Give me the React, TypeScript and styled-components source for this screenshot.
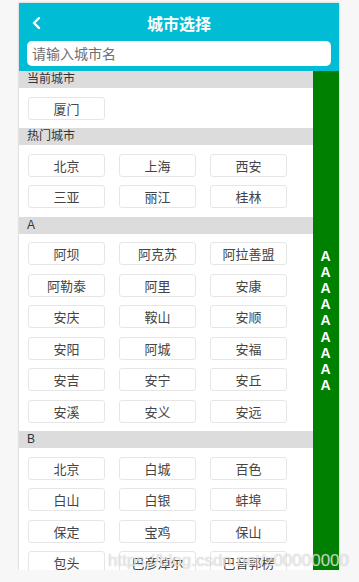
import styled, { createGlobalStyle } from 'styled-components';

const GlobalStyle = createGlobalStyle`
  html, body {
    margin: 0;
    padding: 0;
    background: #f7f7f7;
    font-family: "Liberation Sans", "Noto Sans CJK SC", sans-serif;
  }
`;

const Page = styled.div`
  position: relative;
  padding: 3px 0 0 19px;
  overflow: hidden;
`;

const Phone = styled.div`
  width: 320px;
  height: 567px;
  background: #fff;
  box-shadow: 0 0 2px rgba(0, 0, 0, 0.25);
  display: flex;
  flex-direction: column;
  overflow: hidden;
`;

const Header = styled.header`
  background-color: #00bcd4;
  padding: 0 8px 5px;
  flex-shrink: 0;

  .title-bar {
    height: 38px;
    display: flex;
    align-items: center;
    justify-content: center;
    position: relative;
  }

  .back {
    position: absolute;
    left: 5px;
    top: 14px;
  }

  .title {
    font-size: 16px;
    font-weight: bold;
    color: #fff;
    margin-top: 2px;
  }
`;

const SearchInput = styled.input`
  display: block;
  box-sizing: border-box;
  width: 100%;
  height: 25px;
  border: none;
  border-radius: 5px;
  padding: 0 5px;
  font-size: 14px;
  font-family: "Liberation Sans", "Noto Sans CJK SC", sans-serif;
  outline: none;

  &::placeholder {
    color: #6f6f6f;
  }
`;

const Body = styled.div`
  flex: 1;
  display: flex;
  min-height: 0;
`;

const List = styled.div`
  flex: 1;
  overflow: hidden;
`;

const SectionTitle = styled.div`
  height: 17px;
  line-height: 17px;
  background: #dcdcdc;
  padding-left: 8px;
  font-size: 12px;
  color: #333;
`;

const CityGrid = styled.div`
  display: grid;
  grid-template-columns: repeat(3, 77px);
  column-gap: 14px;
  row-gap: 8.5px;
  padding: 8.5px 9px;
`;

const CityButton = styled.div`
  box-sizing: border-box;
  height: 23px;
  border: 1px solid #e6e6e6;
  border-radius: 3px;
  display: flex;
  align-items: center;
  justify-content: center;
  font-size: 13px;
  color: #444;
`;

const IndexBar = styled.div`
  width: 26px;
  background: #008000;
  display: flex;
  flex-direction: column;
  align-items: center;
  justify-content: center;

  span {
    font-size: 14px;
    font-weight: bold;
    line-height: 16.2px;
    color: #fff;
    margin-left: -1px;
  }
`;

const Watermark = styled.div`
  position: absolute;
  left: 108px;
  top: 551px;
  font-size: 17px;
  color: rgba(255, 255, 255, 0.7);
  text-shadow: 0 0 1px rgba(110, 110, 110, 0.55);
  white-space: nowrap;
  pointer-events: none;
`;

const sections = [
  { title: '当前城市', cities: ['厦门'] },
  { title: '热门城市', cities: ['北京', '上海', '西安', '三亚', '丽江', '桂林'] },
  {
    title: 'A',
    cities: ['阿坝', '阿克苏', '阿拉善盟', '阿勒泰', '阿里', '安康', '安庆', '鞍山', '安顺', '安阳', '阿城', '安福', '安吉', '安宁', '安丘', '安溪', '安义', '安远'],
  },
  {
    title: 'B',
    cities: ['北京', '白城', '百色', '白山', '白银', '蚌埠', '保定', '宝鸡', '保山', '包头', '巴彦淖尔', '巴音郭楞'],
  },
];

export default function App() {
  return (
    <Page>
      <GlobalStyle />
      <Phone>
        <Header>
          <div className="title-bar">
            <svg className="back" width="10" height="12" viewBox="0 0 10 12">
              <path d="M7 1 L2 6 L7 11" fill="none" stroke="#fff" strokeWidth="2.4" strokeLinecap="round" strokeLinejoin="round" />
            </svg>
            <div className="title">城市选择</div>
          </div>
          <SearchInput placeholder="请输入城市名" />
        </Header>
        <Body>
          <List>
            {sections.map((s) => (
              <div key={s.title}>
                <SectionTitle>{s.title}</SectionTitle>
                <CityGrid>
                  {s.cities.map((c, i) => (
                    <CityButton key={i}>{c}</CityButton>
                  ))}
                </CityGrid>
              </div>
            ))}
          </List>
          <IndexBar>
            {Array.from({ length: 9 }).map((_, i) => (
              <span key={i}>A</span>
            ))}
          </IndexBar>
        </Body>
      </Phone>
      <Watermark>https://blog.csdn.net/z00000000</Watermark>
    </Page>
  );
}
